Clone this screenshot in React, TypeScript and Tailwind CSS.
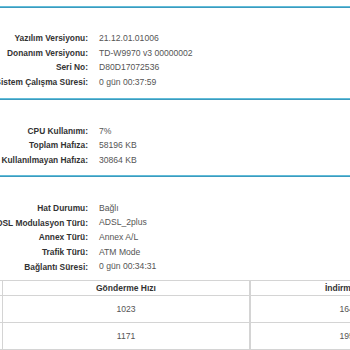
import React from "react";

const Line = () => (
  <div className="w-full border-t border-b border-t-[#62bdd8] border-b-[#3c9abf]" />
);

const Row = ({ label, value }: { label: string; value: string }) => (
  <div className="flex items-center h-[14.7px]">
    <div className="w-[88px] shrink-0 flex justify-end">
      <span className="whitespace-nowrap font-bold text-[8.4px] text-[#333333]">{label}</span>
    </div>
    <div className="ml-[11px] whitespace-nowrap text-[8.6px] text-[#555555]">{value}</div>
  </div>
);

export default function App() {
  return (
    <div
      className="w-[350px] h-[350px] overflow-hidden bg-white"
      style={{ fontFamily: '"Liberation Sans", Arial, sans-serif' }}
    >
      <div className="pt-[6px]">
        <Line />
        <div className="pt-[23px] pb-[8px]">
          <Row label="Yazılım Versiyonu:" value="21.12.01.01006" />
          <Row label="Donanım Versiyonu:" value="TD-W9970 v3 00000002" />
          <Row label="Seri No:" value="D80D17072536" />
          <Row label="Sistem Çalışma Süresi:" value="0 gün 00:37:59" />
        </div>
        <Line />
        <div className="pt-[24px] pb-[7px]">
          <Row label="CPU Kullanımı:" value="7%" />
          <Row label="Toplam Hafıza:" value="58196 KB" />
          <Row label="Kullanılmayan Hafıza:" value="30864 KB" />
        </div>
        <Line />
        <div className="pt-[24px] pb-[6px]">
          <Row label="Hat Durumu:" value="Bağlı" />
          <Row label="ADSL Modulasyon Türü:" value="ADSL_2plus" />
          <Row label="Annex Türü:" value="Annex A/L" />
          <Row label="Trafik Türü:" value="ATM Mode" />
          <Row label="Bağlantı Süresi:" value="0 gün 00:34:31" />
        </div>
        <div className="border-t border-[#d4d4d4] w-[460px]">
          <div className="flex h-[15px] border-b border-[#d4d4d4] text-[8.5px] font-bold text-[#333333]">
            <div className="w-[3px] border-r border-[#d4d4d4]" />
            <div className="w-[248px] border-r-2 border-[#d4d4d4] flex items-center justify-center">Gönderme Hızı</div>
            <div className="w-[196px] flex items-center justify-center">İndirme Hızı</div>
          </div>
          <div className="flex h-[27px] border-b border-[#d4d4d4] text-[8.6px] text-[#555555]">
            <div className="w-[3px] border-r border-[#d4d4d4]" />
            <div className="w-[248px] border-r-2 border-[#d4d4d4] flex items-center justify-center">1023</div>
            <div className="w-[196px] flex items-center justify-center">1647</div>
          </div>
          <div className="flex h-[27px] border-b border-[#d4d4d4] text-[8.6px] text-[#555555]">
            <div className="w-[3px] border-r border-[#d4d4d4]" />
            <div className="w-[248px] border-r-2 border-[#d4d4d4] flex items-center justify-center">1171</div>
            <div className="w-[196px] flex items-center justify-center">1958</div>
          </div>
        </div>
      </div>
    </div>
  );
}
